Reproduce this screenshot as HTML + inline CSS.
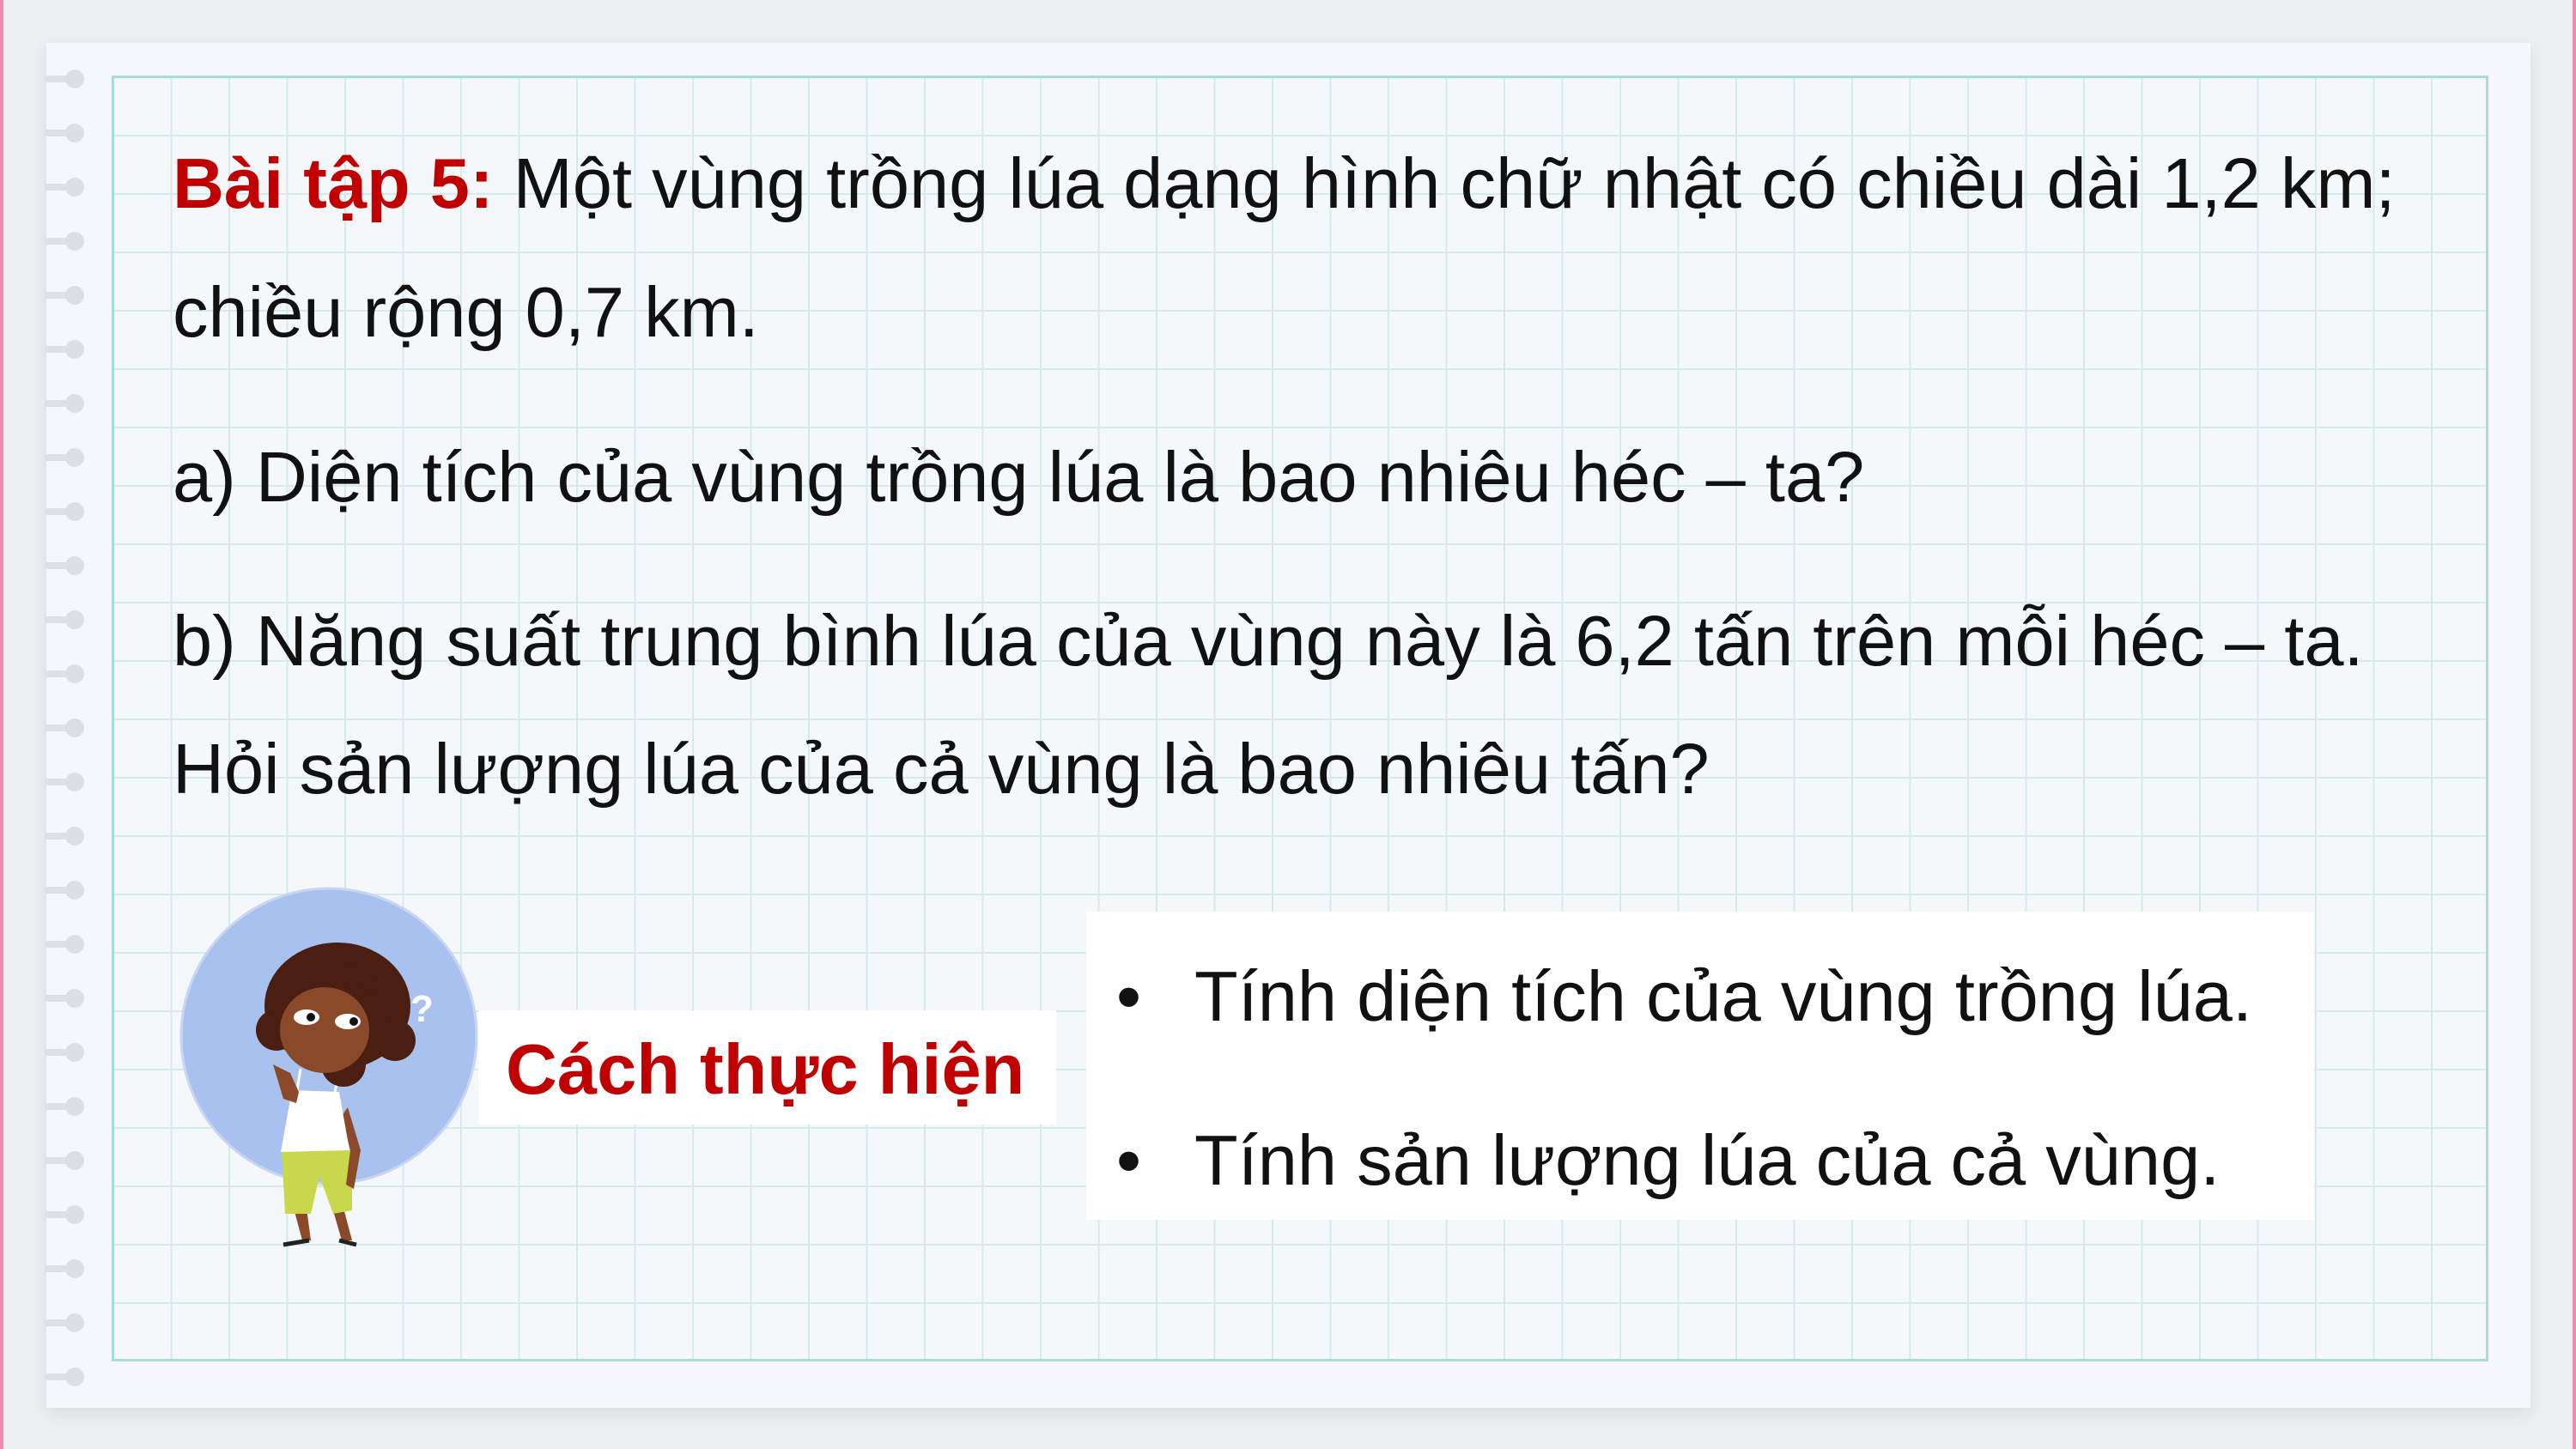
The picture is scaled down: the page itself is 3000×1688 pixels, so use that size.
<!DOCTYPE html>
<html><head><meta charset="utf-8"><style>
html,body{margin:0;padding:0}
body{width:3000px;height:1688px;position:relative;overflow:hidden;background:#eceef1;font-family:"Liberation Sans",Arial,sans-serif}
.paper{position:absolute;left:54px;top:50px;width:2893px;height:1590px;background:#f4f7fb;box-shadow:0 6px 18px rgba(0,0,0,0.08)}
.grid{position:absolute;left:130px;top:88px;width:2768px;height:1498px;border:3px solid #a9dcd6;box-sizing:border-box;
background-image:linear-gradient(to right,#d6eaea 2px,transparent 2px),linear-gradient(to bottom,#d6eaea 2px,transparent 2px);
background-size:67.5px 68px;background-position:-2px -2px;background-color:#f4f8fb}
.ring{position:absolute;left:52px;width:46px;height:22px}
.ring:before{content:"";position:absolute;left:0;top:7px;width:34px;height:8px;background:#dde0e4;border-radius:4px}
.ring:after{content:"";position:absolute;left:24px;top:0;width:22px;height:22px;border-radius:50%;background:#dcdfe3}
.t{position:absolute;left:201px;font-size:83px;color:#111;white-space:nowrap;line-height:1}
.red{color:#c00000;font-weight:bold}
.box1{position:absolute;left:557px;top:1177px;width:673px;height:133px;background:#fff}
.box2{position:absolute;left:1265px;top:1062px;width:1430px;height:359px;background:#fff}
.strip{position:absolute;top:0;width:4px;height:1688px;background:#ee8db0}
</style></head><body>
<div class="strip" style="left:0"></div>
<div class="strip" style="right:0"></div>
<div class="paper"></div>
<div class="grid"></div>
<div id="rings"></div>
<script>
var h='';for(var i=0;i<25;i++){h+='<div class="ring" style="top:'+(81+i*63)+'px"></div>';}
document.getElementById('rings').innerHTML=h;
</script>
<div class="t" style="top:172px"><span class="red">Bài tập 5:</span> Một vùng trồng lúa dạng hình chữ nhật có chiều dài 1,2 km;</div>
<div class="t" style="top:322px">chiều rộng 0,7 km.</div>
<div class="t" style="top:514px">a) Diện tích của vùng trồng lúa là bao nhiêu héc – ta?</div>
<div class="t" style="top:705px">b) Năng suất trung bình lúa của vùng này là 6,2 tấn trên mỗi héc – ta.</div>
<div class="t" style="top:854px">Hỏi sản lượng lúa của cả vùng là bao nhiêu tấn?</div>

<svg style="position:absolute;left:200px;top:1020px" width="380" height="440" viewBox="200 1020 380 440">
<circle cx="383" cy="1207" r="171" fill="#a9c1ee"/>
<circle cx="383" cy="1207" r="172" fill="none" stroke="#c9d6f2" stroke-width="3"/>
<text x="478" y="1190" font-size="44" font-weight="bold" fill="#fff" font-family="Liberation Sans,sans-serif">?</text>
<path d="M340 1400 L352 1445 L362 1445 L356 1400Z" fill="#8a4a2a"/>
<path d="M385 1400 L398 1445 L410 1445 L398 1400Z" fill="#8a4a2a"/>
<path d="M330 1450 L360 1445 M395 1445 L415 1450" stroke="#222" stroke-width="5"/>
<path d="M328 1338 L410 1338 L410 1410 L388 1414 L372 1370 L362 1414 L332 1414Z" fill="#c9d84a"/>
<path d="M405 1290 L420 1340 L412 1385 L403 1380 L408 1340 L398 1300Z" fill="#8a4a2a"/>
<path d="M340 1270 L395 1272 L407 1340 L327 1342Z" fill="#fff"/>
<path d="M346 1270 L350 1245 M390 1272 L396 1245" stroke="#fff" stroke-width="3"/>
<path d="M318 1240 L330 1280 L345 1285 L348 1272 L338 1250 Z" fill="#8a4a2a"/>
<ellipse cx="393" cy="1172" rx="85" ry="74" fill="#4a1f12"/>
<circle cx="322" cy="1200" r="24" fill="#4a1f12"/>
<circle cx="460" cy="1212" r="24" fill="#4a1f12"/>
<circle cx="400" cy="1240" r="26" fill="#4a1f12"/>
<ellipse cx="378" cy="1200" rx="52" ry="50" fill="#8a4a2a"/>
<path d="M340 1150 Q390 1130 440 1160 L440 1140 Q390 1105 330 1140Z" fill="#4a1f12"/>
<ellipse cx="357" cy="1185" rx="15" ry="9" fill="#fff"/>
<ellipse cx="405" cy="1190" rx="15" ry="9" fill="#fff"/>
<circle cx="362" cy="1185" r="5" fill="#111"/>
<circle cx="412" cy="1190" r="5" fill="#111"/>
</svg>

<div class="box1"></div>
<div class="t" style="left:589px;top:1204px;color:#c00000;font-weight:bold">Cách thực hiện</div>
<div class="box2"></div>
<div class="t" style="left:1300px;top:1119px">•</div>
<div class="t" style="left:1391px;top:1119px">Tính diện tích của vùng trồng lúa.</div>
<div class="t" style="left:1300px;top:1310px">•</div>
<div class="t" style="left:1391px;top:1310px">Tính sản lượng lúa của cả vùng.</div>
</body></html>
